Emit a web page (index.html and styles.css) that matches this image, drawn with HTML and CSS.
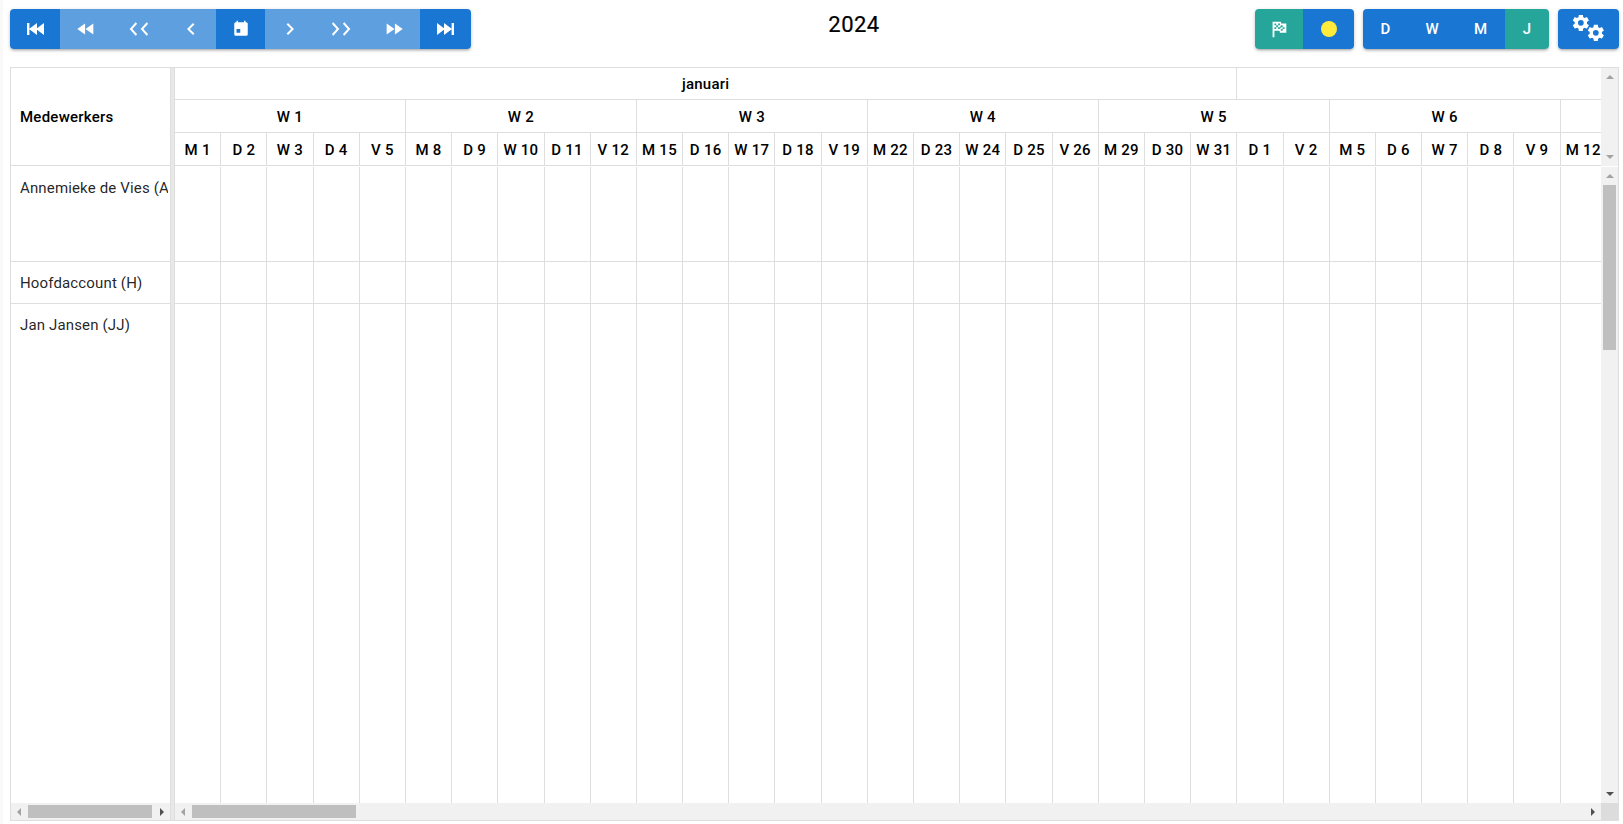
FILE: index.html
```html
<!DOCTYPE html>
<html lang="nl">
<head>
<meta charset="utf-8">
<title>Planning 2024</title>
<link rel="stylesheet" href="styles.css">
</head>
<body>
<svg class="defs" width="0" height="0" aria-hidden="true"><defs>
<path id="cog" d="M12,15.5A3.5,3.5 0 0,1 8.5,12A3.5,3.5 0 0,1 12,8.5A3.5,3.5 0 0,1 15.5,12A3.5,3.5 0 0,1 12,15.5M19.43,12.97C19.47,12.65 19.5,12.33 19.5,12C19.5,11.67 19.47,11.34 19.43,11L21.54,9.37C21.73,9.22 21.78,8.95 21.66,8.73L19.66,5.27C19.54,5.05 19.27,4.96 19.05,5.05L16.56,6.05C16.04,5.66 15.5,5.32 14.87,5.07L14.5,2.42C14.46,2.18 14.25,2 14,2H10C9.75,2 9.54,2.18 9.5,2.42L9.13,5.07C8.5,5.32 7.96,5.66 7.44,6.05L4.95,5.05C4.73,4.96 4.46,5.05 4.34,5.27L2.34,8.73C2.21,8.95 2.27,9.22 2.46,9.37L4.57,11C4.53,11.34 4.5,11.67 4.5,12C4.5,12.33 4.53,12.65 4.57,12.97L2.46,14.63C2.27,14.78 2.21,15.05 2.34,15.27L4.34,18.73C4.46,18.95 4.73,19.03 4.95,18.95L7.44,17.94C7.96,18.34 8.5,18.68 9.13,18.93L9.5,21.58C9.54,21.82 9.75,22 10,22H14C14.25,22 14.46,21.82 14.5,21.58L14.87,18.93C15.5,18.67 16.04,18.34 16.56,17.94L19.05,18.95C19.27,19.03 19.54,18.95 19.66,18.73L21.66,15.27C21.78,15.05 21.73,14.78 21.54,14.63L19.43,12.97Z"/>
</defs></svg>
<div class="page">
  <header class="toolbar">
    <div class="group">
      <button class="btn w50"><svg class="ico" viewBox="0 0 24 24"><path d="M4 6h2.4v12H4zM6 12l8-6v12zM13 12l8-6v12z"/></svg></button>
      <button class="btn faded w52"><svg class="ico ico-22" viewBox="0 0 24 24"><path d="M11.5,12L20,18V6M11,18V6L2.5,12L11,18Z"/></svg></button>
      <button class="btn faded w54"><svg class="ico-w" viewBox="0 0 22 18"><path d="M8.4 3 3 9l5.4 6M19.4 3 14 9l5.4 6"/></svg></button>
      <button class="btn faded w50"><svg class="ico" viewBox="0 0 24 24"><path d="M15.41,16.58L10.83,12L15.41,7.41L14,6L8,12L14,18L15.41,16.58Z"/></svg></button>
      <button class="btn w49"><svg class="ico ico-cal" viewBox="0 0 24 24"><path fill-rule="evenodd" d="M6 1v2H5a2 2 0 0 0-2 2v14a2 2 0 0 0 2 2h14a2 2 0 0 0 2-2V5a2 2 0 0 0-2-2h-1V1h-2v2H8V1zM6 12h5v5H6z"/></svg></button>
      <button class="btn faded w49"><svg class="ico" viewBox="0 0 24 24"><path d="M8.59,16.58L13.17,12L8.59,7.41L10,6L16,12L10,18L8.59,16.58Z"/></svg></button>
      <button class="btn faded w54"><svg class="ico-w" viewBox="0 0 22 18"><path d="M2.6 3 8 9l-5.4 6M13.6 3 19 9l-5.4 6"/></svg></button>
      <button class="btn faded w52"><svg class="ico ico-22" viewBox="0 0 24 24"><path d="M13,6V18L21.5,12M4,18L12.5,12L4,6V18Z"/></svg></button>
      <button class="btn w51"><svg class="ico" viewBox="0 0 24 24"><path d="M20 6h-2.4v12H20zM18 12l-8-6v12zM11 12 3 6v12z"/></svg></button>
    </div>
    <h1 class="title">2024</h1>
    <div class="group">
      <button class="btn teal flag"><svg class="ico ico-flag" viewBox="0 0 24 24"><path fill-rule="evenodd" d="M14.4,6H20V16H13L12.6,14H7V21H5V4H14L14.4,6M14,14H16V12H18V10H16V8H14V10L13,8V6H11V8H9V6H7V8H9V10H7V12H9V10H11V12H13V10L14,12V14M11,10V8H13V10H11M14,10H16V12H14V10Z"/></svg></button>
      <button class="btn dot-btn"><span class="dot"></span></button>
    </div>
    <div class="group">
      <button class="btn letter l-d">D</button>
      <button class="btn letter l-w">W</button>
      <button class="btn letter l-m">M</button>
      <button class="btn letter teal l-j">J</button>
    </div>
    <div class="group">
      <button class="btn cogs"><svg class="cog-ico" viewBox="0 0 34 28"><use href="#cog" transform="translate(-1 -2) scale(.82)"/><use href="#cog" transform="translate(14 8) scale(.82)"/></svg></button>
    </div>
  </header>

  <main class="sheet">
    <section class="left">
      <div class="left-head">Medewerkers</div>
      <div class="name-row first"><span class="name">Annemieke de Vies (AV)</span></div>
      <div class="name-row"><span class="name">Hoofdaccount (H)</span></div>
      <div class="name-row last"><span class="name">Jan Jansen (JJ)</span></div>
      <div class="hbar hbar-left">
        <span class="arr arr-l off"></span>
        <span class="thumb-h thumb-left"></span>
        <span class="arr arr-r"></span>
      </div>
    </section>
    <div class="split"></div>
    <section class="right">
      <div class="right-top">
        <div class="timeline">
          <div class="t-row months">
            <div class="c m23">januari</div>
            <div class="c m21"></div>
          </div>
          <div class="t-row weeks">
            <div class="c wk">W 1</div><div class="c wk">W 2</div><div class="c wk">W 3</div><div class="c wk">W 4</div><div class="c wk">W 5</div><div class="c wk">W 6</div><div class="c wk"></div>
          </div>
          <div class="t-row days">
            <div class="c">M 1</div><div class="c">D 2</div><div class="c">W 3</div><div class="c">D 4</div><div class="c">V 5</div>
            <div class="c">M 8</div><div class="c">D 9</div><div class="c">W 10</div><div class="c">D 11</div><div class="c">V 12</div>
            <div class="c">M 15</div><div class="c">D 16</div><div class="c">W 17</div><div class="c">D 18</div><div class="c">V 19</div>
            <div class="c">M 22</div><div class="c">D 23</div><div class="c">W 24</div><div class="c">D 25</div><div class="c">V 26</div>
            <div class="c">M 29</div><div class="c">D 30</div><div class="c">W 31</div><div class="c">D 1</div><div class="c">V 2</div>
            <div class="c">M 5</div><div class="c">D 6</div><div class="c">W 7</div><div class="c">D 8</div><div class="c">V 9</div>
            <div class="c">M 12</div>
          </div>
        </div>
        <div class="vbar vbar-head"><span class="arr arr-u off"></span><span class="arr arr-d off"></span></div>
      </div>
      <div class="right-body">
        <div class="grid-body">
          <div class="b-row r1"><i></i><i></i><i></i><i></i><i></i><i></i><i></i><i></i><i></i><i></i><i></i><i></i><i></i><i></i><i></i><i></i><i></i><i></i><i></i><i></i><i></i><i></i><i></i><i></i><i></i><i></i><i></i><i></i><i></i><i></i><i></i></div>
          <div class="b-row r2"><i></i><i></i><i></i><i></i><i></i><i></i><i></i><i></i><i></i><i></i><i></i><i></i><i></i><i></i><i></i><i></i><i></i><i></i><i></i><i></i><i></i><i></i><i></i><i></i><i></i><i></i><i></i><i></i><i></i><i></i><i></i></div>
          <div class="b-row r3"><i></i><i></i><i></i><i></i><i></i><i></i><i></i><i></i><i></i><i></i><i></i><i></i><i></i><i></i><i></i><i></i><i></i><i></i><i></i><i></i><i></i><i></i><i></i><i></i><i></i><i></i><i></i><i></i><i></i><i></i><i></i></div>
        </div>
        <div class="vbar vbar-body">
          <span class="arr arr-u off"></span>
          <span class="thumb-v"></span>
          <span class="arr arr-d"></span>
        </div>
      </div>
      <div class="right-foot">
        <div class="hbar hbar-right">
          <span class="arr arr-l off"></span>
          <span class="thumb-h thumb-right"></span>
          <span class="arr arr-r"></span>
        </div>
        <div class="corner"></div>
      </div>
    </section>
  </main>
</div>
</body>
</html>
```
FILE: styles.css
```css
* { box-sizing: border-box; }
html, body { margin: 0; height: 100%; }
body {
  background: #fff;
  font-family: Roboto, "Liberation Sans", sans-serif;
  color: #000;
  overflow: hidden;
}
.defs { position: absolute; }
.page {
  width: 1623px;
  height: 824px;
  padding: 9px 4px 3px 10px;
  background: linear-gradient(to right, #f9f9f9 3px, #fff 3px);
  display: flex;
  flex-direction: column;
}

/* toolbar */
.toolbar { display: flex; align-items: flex-start; height: 40px; margin-bottom: 18px; }
.group {
  display: flex;
  height: 40px;
  border-radius: 4px;
  overflow: hidden;
  box-shadow: 0 2px 3px -1px rgba(0,0,0,.3), 0 1px 4px rgba(0,0,0,.14);
  margin-left: 9px;
}
.group:first-child { margin-left: 0; }
.btn {
  border: 0;
  margin: 0;
  height: 40px;
  padding: 0;
  background: #1976d2;
  color: #fff;
  display: flex;
  align-items: center;
  justify-content: center;
  font: 500 15px Roboto, sans-serif;
}
.w49 { width: 49px; }
.w50 { width: 50px; }
.w51 { width: 51px; }
.w52 { width: 52px; }
.w54 { width: 54px; }
.faded { background: #5e9fdf; }
.teal { background: #26a69a; }
.ico { width: 24px; height: 24px; fill: #fff; display: block; flex: none; }
.ico-22 { width: 22px; height: 22px; }
.ico-cal { width: 18px; height: 18px; }
.ico-flag { width: 22px; height: 22px; }
.ico-w { width: 22px; height: 18px; fill: none; stroke: #fff; stroke-width: 2; display: block; }
.flag { width: 48px; }
.dot-btn { width: 51px; }
.dot { width: 16px; height: 16px; border-radius: 50%; background: #ffeb3b; }
.l-d { width: 45px; }
.l-w { width: 48px; }
.l-m { width: 49px; }
.l-j { width: 44px; }
.cogs { width: 61px; }
.cog-ico { width: 34px; height: 28px; fill: #fff; margin-top: -1px; }
.title {
  flex: 1;
  margin: 0;
  padding: 3px 9px 0 0;
  text-align: center;
  font-size: 22px;
  line-height: 26px;
  font-weight: 400;
  letter-spacing: .5px;
  -webkit-text-stroke: .2px #000;
}

/* sheet */
.sheet {
  flex: none;
  width: 1609px;
  height: 754px;
  display: flex;
  border: 1px solid #dedede;
  background: #fff;
}
.left { width: 159px; display: flex; flex-direction: column; }
.left-head {
  height: 98px;
  border-bottom: 1px solid #dedede;
  padding-left: 9px;
  display: flex;
  align-items: center;
  font-size: 15px;
  font-weight: 500;
  letter-spacing: .25px;
}
.name-row {
  border-bottom: 1px solid #dedede;
  padding: 11px 0 0 9px;
  height: 42px;
  font-size: 15px;
  line-height: 20px;
  letter-spacing: .15px;
  color: rgba(0,0,0,.87);
}
.name-row.first { height: 96px; padding-top: 12px; }
.name-row.last { flex: 1; border-bottom: 0; }
.name { display: block; width: 148px; overflow: hidden; white-space: nowrap; }
.split { width: 5px; background: #e8e8e8; border-left: 1px solid #dedede; border-right: 1px solid #dedede; }
.right { flex: 1; min-width: 0; display: flex; flex-direction: column; }
.right-top { height: 98px; display: flex; }
.timeline { flex: 1; min-width: 0; overflow: hidden; border-bottom: 1px solid #dedede; }
.t-row { display: grid; grid-template-columns: repeat(44, 46.2px); }
.c {
  display: flex;
  align-items: center;
  justify-content: center;
  white-space: nowrap;
  border-right: 1px solid #dedede;
  border-bottom: 1px solid #dedede;
  font-size: 15px;
  font-weight: 500;
  letter-spacing: .25px;
}
.months .c { height: 32px; }
.m23 { grid-column: span 23; }
.m21 { grid-column: span 21; }
.weeks .c { height: 33px; padding-top: 2px; }
.wk { grid-column: span 5; }
.days .c { height: 32px; border-bottom: 0; padding-top: 2px; }
.right-body { flex: 1; min-height: 0; display: flex; padding-top: 1px; }
.grid-body { flex: 1; min-width: 0; overflow: hidden; display: flex; flex-direction: column; }
.b-row { display: grid; grid-template-columns: repeat(31, 46.2px); border-bottom: 1px solid #dedede; width: 1432.2px; }
.b-row i { display: block; border-right: 1px solid #dedede; }
.r1 { height: 95px; }
.r2 { height: 42px; }
.r3 { flex: 1; border-bottom: 0; }
.right-foot { height: 17px; display: flex; }

/* scrollbars */
.hbar { height: 17px; background: #f1f1f1; display: flex; align-items: center; }
.hbar-left { flex: none; }
.hbar-right { flex: 1; }
.thumb-h { height: 13px; background: #bfbfbf; display: block; }
.thumb-left { width: 124px; margin-left: 7px; }
.thumb-right { width: 164px; margin-left: 7px; }
.vbar { width: 17px; background: #f1f1f1; display: flex; flex-direction: column; align-items: center; }
.vbar-head { justify-content: space-between; padding: 7px 0; }
.vbar-body { padding: 7px 0; }
.thumb-v { width: 13px; height: 165px; background: #bfbfbf; margin-top: 7px; margin-bottom: auto; display: block; }
.corner { width: 17px; background: #dcdcdc; }
.arr { display: block; width: 0; height: 0; border-style: solid; border-color: transparent; }
.arr-l { border-width: 4px 4px 4px 0; border-right-color: #505050; margin-left: 6px; }
.arr-r { border-width: 4px 0 4px 4px; border-left-color: #505050; margin-left: auto; margin-right: 6px; }
.arr-u { border-width: 0 4px 4px; border-bottom-color: #505050; }
.arr-d { border-width: 4px 4px 0; border-top-color: #505050; }
.arr.arr-l.off { border-right-color: #a3a3a3; }
.arr.arr-u.off { border-bottom-color: #a3a3a3; }
.arr.arr-d.off { border-top-color: #a3a3a3; }
```
